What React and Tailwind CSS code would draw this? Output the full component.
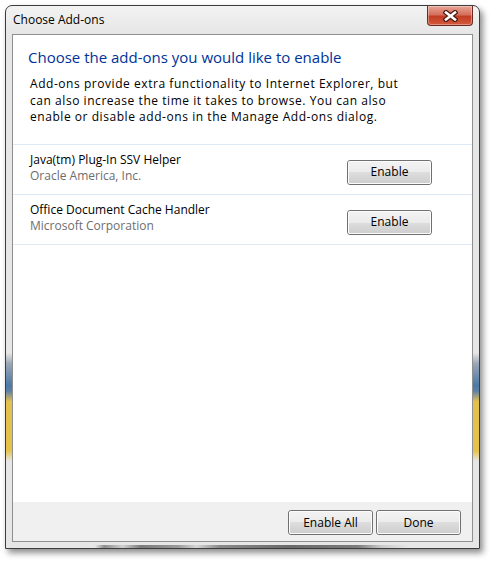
import React from "react";

const ADDONS = [
  { name: "Java(tm) Plug-In SSV Helper", publisher: "Oracle America, Inc." },
  { name: "Office Document Cache Handler", publisher: "Microsoft Corporation" },
];

const font = { fontFamily: '"Open Sans", "Noto Sans", sans-serif' };

const WinButton = ({ children, className = "" }) => (
  <button
    className={`h-[25px] w-[85px] rounded-[3px] border border-[#707070] p-0 text-[12px] text-black ${className}`}
  >
    <span className="flex h-full w-full items-center justify-center rounded-[2px] border border-[#fcfcfc] bg-[linear-gradient(to_bottom,#f2f2f2_0%,#ebebeb_50%,#dddddd_50%,#cfcfcf_100%)]">
      {children}
    </span>
  </button>
);

const CloseButton = () => (
  <div className="flex h-[20px] w-[46px] items-center justify-center rounded-b-[4px] border border-t-0 border-[#6d2a22] bg-[linear-gradient(to_bottom,#e8a596_0%,#d6705e_45%,#c23d24_55%,#d45a3c_100%)] shadow-[inset_0_0_0_1px_rgba(255,255,255,0.35)]">
    <svg width="15" height="12" viewBox="0 0 15 12">
      <path
        d="M3 2.5 L12 9.5 M12 2.5 L3 9.5"
        stroke="#4a1a14"
        strokeWidth="5"
        strokeLinecap="square"
      />
      <path
        d="M3 2.5 L12 9.5 M12 2.5 L3 9.5"
        stroke="#ffffff"
        strokeWidth="2.6"
        strokeLinecap="square"
      />
    </svg>
  </div>
);

export default function App() {
  return (
    <div className="h-[561px] w-[491px] bg-white pl-[5px] pt-[5px]" style={font}>
      <div className="flex h-[544px] w-[475px] flex-col rounded-t-[7px] border border-[#3c3c3c] bg-[linear-gradient(to_bottom,#f3f3f3_0%,#e6e6e6_5%,#e6e6e6_64%,#9aa6b6_66%,#4d79a5_70%,#5b7fa8_71%,#e3c14f_73%,#e6c24c_82%,#e6e6e6_84%,#e6e6e6_100%)] px-[6px] shadow-[3px_4px_6px_rgba(0,0,0,0.45)]">
        <div className="flex h-[28px] shrink-0 items-start justify-between">
          <span className="pl-px pt-[6px] text-[12px] leading-[16px] text-black">
            Choose Add-ons
          </span>
          <CloseButton />
        </div>

        <div className="flex flex-1 flex-col border border-[#8e8f8f] bg-white">
          <div className="flex-1">
            <h1 className="pl-[15px] pt-[12px] text-[15px] leading-[20px] text-[#003399]">
              Choose the add-ons you would like to enable
            </h1>
            <p className="pl-[17px] pr-[10px] pt-[9px] text-[12px] leading-[16.5px] tracking-[0.55px] text-black">
              Add-ons provide extra functionality to Internet Explorer, but
              <br />
              can also increase the time it takes to browse. You can also
              <br />
              enable or disable add-ons in the Manage Add-ons dialog.
            </p>

            <div className="mt-[18px] border-t border-[#dde9f5]">
              {ADDONS.map((item) => (
                <div
                  key={item.name}
                  className="flex h-[50px] items-start justify-between border-b border-[#dde9f5] pl-[17px] pr-[40px]"
                >
                  <div className="pt-[7px]">
                    <div className="text-[12px] leading-[16.5px] text-black">
                      {item.name}
                    </div>
                    <div className="text-[12px] leading-[16.5px] text-[#6d6d6d]">
                      {item.publisher}
                    </div>
                  </div>
                  <WinButton className="mt-[15px]">Enable</WinButton>
                </div>
              ))}
            </div>
          </div>

          <div className="flex h-[39px] items-start justify-end gap-[3px] bg-[#f0f0f0] pr-[11px] pt-[8px]">
            <WinButton>Enable All</WinButton>
            <WinButton>Done</WinButton>
          </div>
        </div>

        <div className="h-[6px] shrink-0 bg-[linear-gradient(to_right,#e6e6e6_0%,#e6e6e6_18%,#8c8c8c_20%,#d0d0d0_24%,#7a7a7a_28%,#9a9a9a_36%,#d6d6d6_40%,#8a8a8a_45%,#6a6a6a_60%,#7c7c7c_75%,#c8c8c8_80%,#e6e6e6_86%,#e6e6e6_100%)] bg-[length:100%_3px] bg-bottom bg-no-repeat" />
      </div>
    </div>
  );
}
